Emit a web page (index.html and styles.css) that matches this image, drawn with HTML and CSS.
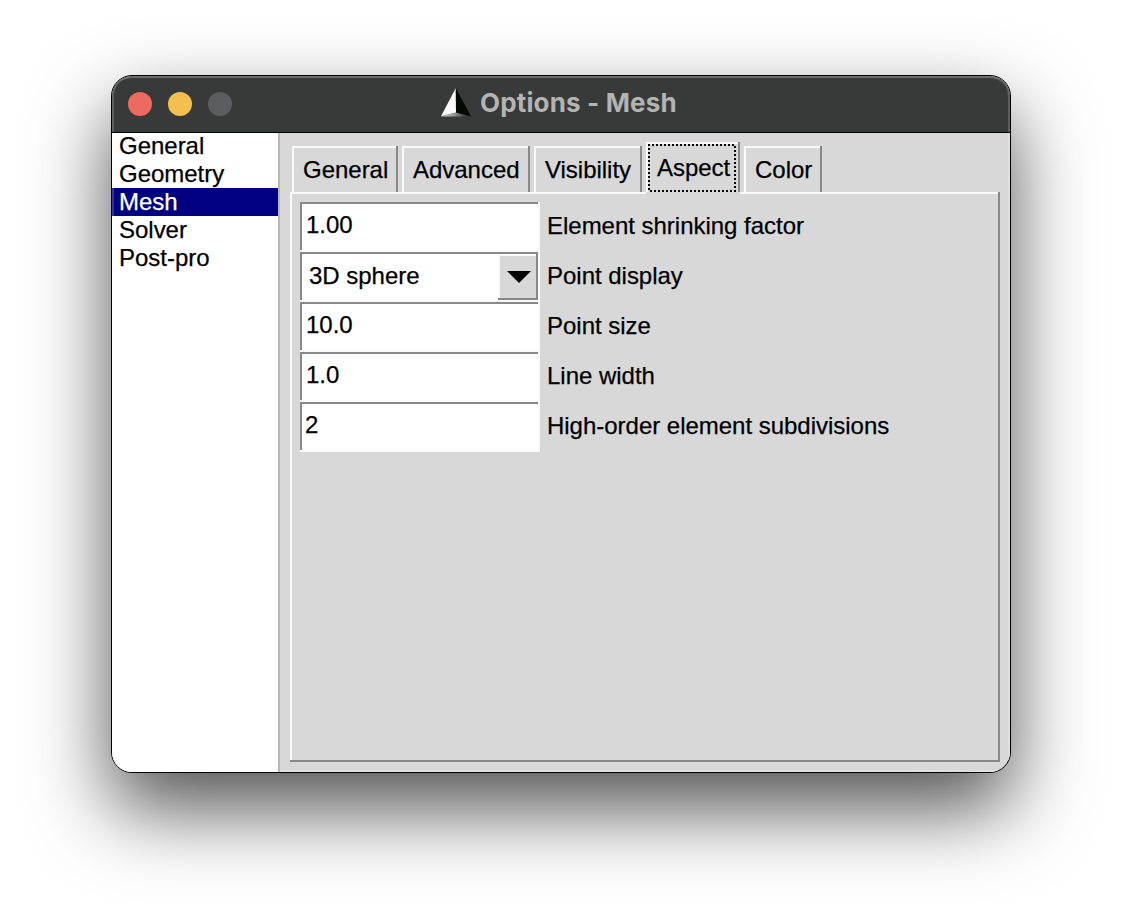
FILE: index.html
```html
<!DOCTYPE html>
<html lang="en">
<head>
<meta charset="utf-8">
<title>Options - Mesh</title>
<link rel="stylesheet" href="styles.css">
</head>
<body>
<main class="window">
  <header class="titlebar">
    <div class="lights"><span class="light close"></span><span class="light minimize"></span><span class="light zoom"></span></div>
    <svg class="logo" width="32" height="30" viewBox="0 0 32 30">
      <defs>
        <linearGradient id="base" x1="0" x2="1"><stop offset="0" stop-color="#ddd"/><stop offset=".5" stop-color="#888"/><stop offset="1" stop-color="#111"/></linearGradient>
      </defs>
      <path d="M1 28.500L16 24.500L31 28.500Z" fill="url(#base)"/>
      <path d="M15.800 0L1 28.300L16 24.500Z" fill="#fafafa"/>
      <path d="M15.800 0L31 28.300L16 24.500Z" fill="#030803"/>
    </svg>
    <h1 class="title">Options - Mesh</h1>
  </header>
  <div class="body">
    <ul class="sidebar">
      <li><span>General</span></li>
      <li><span>Geometry</span></li>
      <li class="selected"><span>Mesh</span></li>
      <li><span>Solver</span></li>
      <li><span>Post-pro</span></li>
    </ul>
    <section class="content">
      <nav class="tabs">
        <div class="tab general"><span>General</span></div>
        <div class="tab advanced"><span>Advanced</span></div>
        <div class="tab visibility"><span>Visibility</span></div>
        <div class="tab aspect"><div class="focus"><span>Aspect</span></div></div>
        <div class="tab color"><span>Color</span></div>
      </nav>
      <div class="panel">
        <div class="row"><div class="field"><span>1.00</span></div><label>Element shrinking factor</label></div>
        <div class="row"><div class="field choice"><span>3D sphere</span><div class="drop"><svg width="24" height="12" viewBox="0 0 24 12"><path d="M0 0H24L12 12Z"/></svg></div></div><label>Point display</label></div>
        <div class="row"><div class="field"><span>10.0</span></div><label>Point size</label></div>
        <div class="row"><div class="field"><span>1.0</span></div><label>Line width</label></div>
        <div class="row"><div class="field integer"><span>2</span></div><label>High-order element subdivisions</label></div>
      </div>
    </section>
  </div>
</main>
</body>
</html>
```
FILE: styles.css
```css
* { box-sizing: border-box; }
body {
  margin: 0;
  padding: 75px 111px;
  height: 920px;
  overflow: hidden;
  background: #fff;
  font: 24px/28px "Liberation Sans", Arial, sans-serif;
  letter-spacing: -.02px;
  -webkit-text-stroke: .25px currentColor;
  color: #000;
  white-space: nowrap;
}
.window {
  display: flex;
  flex-direction: column;
  width: 900px;
  height: 698px;
  border: 1px solid #000;
  border-radius: 21px;
  background: #d8d8d8;
  overflow: hidden;
  box-shadow: 0 36px 80px rgba(0, 0, 0, .68);
}
.titlebar {
  display: flex;
  flex: none;
  height: 57px;
  background: #383a39;
  border-bottom: 1px solid #000;
  border-radius: 20px 20px 0 0;
  box-shadow: inset 0 2px 0 #6c6d6c, inset 2px 0 0 #5d5f5e, inset -2px 0 0 #5d5f5e;
}
.lights { display: flex; gap: 16px; padding: 16px 0 0 16px; width: 328px; }
.light { width: 24px; height: 24px; border-radius: 50%; }
.close { background: #ed6a5f; }
.minimize { background: #f5bf4f; }
.zoom { background: #5c5d5f; }
.logo { margin-top: 12px; }
.title {
  margin: 0 0 0 8px;
  padding-top: 11px;
  font: 700 26px/32px Inter, sans-serif;
  font-feature-settings: "calt" 0;
  letter-spacing: .15px;
  -webkit-text-stroke: 0;
  color: #b3b4b4;
}
.body { display: flex; flex: 1; }
.sidebar {
  width: 168px;
  margin: 0;
  padding: 0;
  list-style: none;
  background: #fff;
  border-right: 2px solid #b8b8b8;
}
.sidebar li { height: 28px; padding-left: 7px; line-height: 28px; }
.sidebar li:first-child { height: 27px; line-height: 26px; }
.sidebar .selected { background: #000080; color: #fff; box-shadow: inset 2px 0 0 #333399; }
.content {
  flex: 1;
  padding: 9px 10px 10px;
  box-shadow: inset -2px -2px 0 #e0e0e0;
}
.tabs {
  display: flex;
  align-items: flex-end;
  gap: 4px;
  height: 52px;
  padding-left: 2px;
}
.tab {
  height: 46px;
  margin-bottom: 2px;
  padding: 10px 0 0 11px;
  box-shadow: inset -2px 0 0 #888, inset 2px 2px 0 #fafafa;
}
.general { width: 106px; }
.advanced { width: 128px; }
.visibility { width: 108px; }
.aspect {
  position: relative;
  width: 94px;
  height: 52px;
  margin: 0;
  padding: 2px;
  background: #d8d8d8;
  border-bottom: 2px solid #d8d8d8;
}
.color { width: 78px; }
.focus {
  width: 88px;
  height: 48px;
  padding: 10px 0 0 9px;
  background:
    repeating-linear-gradient(90deg, #000 0 2px, transparent 2px 4px) 0 0 / 100% 2px no-repeat,
    repeating-linear-gradient(90deg, transparent 0 2px, #000 2px 4px) 0 100% / 100% 2px no-repeat,
    repeating-linear-gradient(#000 0 2px, transparent 2px 4px) 0 0 / 2px 100% no-repeat,
    repeating-linear-gradient(transparent 0 2px, #000 2px 4px) 100% 0 / 2px 100% no-repeat;
}
.panel {
  width: 710px;
  height: 570px;
  margin-top: -2px;
  padding: 10px;
  box-shadow: inset -2px -2px 0 #888, inset 2px 2px 0 #fafafa;
}
.row { display: flex; height: 50px; }
.field {
  display: flex;
  justify-content: space-between;
  width: 240px;
  height: 50px;
  padding: 9px 2px 2px 6px;
  background: #fff;
  box-shadow: inset -2px -2px 0 #fafafa, inset 2px 2px 0 #888;
}
.integer { padding-left: 5px; }
.choice { padding: 2px 2px 2px 9px; line-height: 44px; }
.drop {
  display: flex;
  align-items: center;
  justify-content: center;
  width: 40px;
  height: 46px;
  padding-left: 2px;
  background: #d8d8d8;
  box-shadow: inset -2px -2px 0 #888, inset 2px 2px 0 #fafafa;
}
.row label { padding-left: 7px; line-height: 48px; }
```
